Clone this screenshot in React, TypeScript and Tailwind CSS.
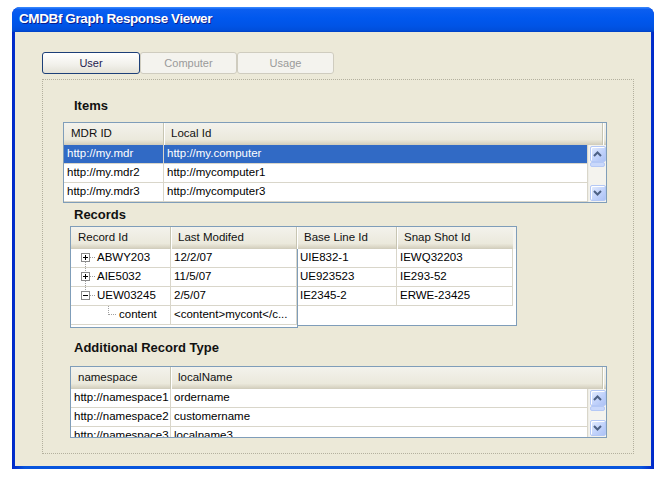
import React from 'react';

const UI = "font-['Liberation_Sans',Arial,sans-serif]";

function Chevron({ dir }: { dir: 'up' | 'down' }) {
  return (
    <svg width="9" height="6" viewBox="0 0 9 6">
      <path
        d={dir === 'up' ? 'M1 5 L4.5 1.5 L8 5' : 'M1 1 L4.5 4.5 L8 1'}
        stroke="#4d6185"
        strokeWidth="2"
        fill="none"
      />
    </svg>
  );
}

function ScrollButton({ dir }: { dir: 'up' | 'down' }) {
  return (
    <div className="mx-auto flex h-[16px] w-[16px] items-center justify-center rounded-[2px] border border-[#b4c8f6] bg-[linear-gradient(135deg,#e4ecfe,#c2d3fb_55%,#adc2f5)] shadow-[inset_1px_1px_0_#fff]">
      <Chevron dir={dir} />
    </div>
  );
}

// vertical scrollbar sitting next to the rows
function Scrollbar() {
  return (
    <div className="flex w-[18px] flex-col bg-[#f4f3ee] py-[1px] border-l border-[#eeede6]">
      <ScrollButton dir="up" />
      <div className="mx-auto h-[5px] w-[15px] rounded-[2px] border border-[#b4c8f6] bg-[#c9d8fb]" />
      <div className="flex-1" />
      <ScrollButton dir="down" />
    </div>
  );
}

function HeaderCell({ children, w, last }: { children?: React.ReactNode; w?: string; last?: boolean }) {
  return (
    <div
      className={`flex h-full items-center pl-[7px] text-[11.5px] text-[#111] ${w ?? 'flex-1'} ${
        last ? '' : 'border-r border-[#c7c5b2] shadow-[1px_0_0_#fff]'
      }`}
    >
      {children}
    </div>
  );
}

function Header({ cols, filler }: { cols: { label: string; w?: string }[]; filler?: boolean }) {
  return (
    <div className="flex h-[22px] bg-[linear-gradient(to_bottom,#f3f2ec,#ebe9dc_75%,#dcd8c8_90%,#cfcbba)]">
      {cols.map((c, i) => (
        <HeaderCell key={i} w={c.w}>
          {c.label}
        </HeaderCell>
      ))}
      {filler && <div className="flex-1" />}
    </div>
  );
}

function Cell({ children, w, sel }: { children?: React.ReactNode; w?: string; sel?: boolean }) {
  return (
    <div
      className={`flex h-full items-center overflow-hidden whitespace-nowrap pl-[3px] text-[11.5px] ${w ?? 'flex-1'} ${
        sel ? 'text-white' : 'text-black'
      } border-r border-[#d9d6ca]`}
    >
      {children}
    </div>
  );
}

function Row({ cells, sel, widths }: { cells: React.ReactNode[]; sel?: boolean; widths: (string | undefined)[] }) {
  return (
    <div className={`flex h-[19px] border-b border-[#d9d6ca] ${sel ? 'bg-[#316ac5]' : 'bg-white'}`}>
      {cells.map((c, i) => (
        <Cell key={i} w={widths[i]} sel={sel}>
          {c}
        </Cell>
      ))}
    </div>
  );
}

function TreeGlyph({ kind, top, bottom }: { kind: 'plus' | 'minus'; top?: boolean; bottom?: boolean }) {
  return (
    <svg width="22" height="18" viewBox="0 0 22 18" className="shrink-0">
      {top && <line x1="11.5" y1="0" x2="11.5" y2="4" stroke="#a0a0a0" strokeDasharray="1 1" />}
      {bottom && <line x1="11.5" y1="13" x2="11.5" y2="18" stroke="#a0a0a0" strokeDasharray="1 1" />}
      <line x1="16" y1="8.5" x2="22" y2="8.5" stroke="#a0a0a0" strokeDasharray="1 1" />
      <rect x="7.5" y="4.5" width="8" height="8" fill="#fff" stroke="#8a8a8a" />
      <line x1="9" y1="8.5" x2="14" y2="8.5" stroke="#000" />
      {kind === 'plus' && <line x1="11.5" y1="6" x2="11.5" y2="11" stroke="#000" />}
    </svg>
  );
}

function ChildGlyph() {
  return (
    <svg width="42" height="18" viewBox="0 0 42 18" className="shrink-0">
      <line x1="34.5" y1="0" x2="34.5" y2="9" stroke="#a0a0a0" strokeDasharray="1 1" />
      <line x1="35" y1="8.5" x2="42" y2="8.5" stroke="#a0a0a0" strokeDasharray="1 1" />
    </svg>
  );
}

function Label({ children, className }: { children: React.ReactNode; className?: string }) {
  return <div className={`ml-[31px] h-[15px] text-[13px] font-bold leading-[15px] text-[#111] ${className ?? ''}`}>{children}</div>;
}

export default function App() {
  const itemW = ['w-[100px]', undefined];
  const recW = ['w-[100px]', 'w-[126px]'];
  const baseW = ['w-[100px]', 'w-[116px]'];

  return (
    <div className={`h-[486px] w-[665px] bg-white pt-[7px] pl-[12px] ${UI}`}>
      <div className="flex h-[462px] w-[642px] flex-col overflow-hidden rounded-t-[8px] bg-[linear-gradient(to_right,#0027c8,#0855dd_2%,#0855dd_98%,#0027c8)]">
        {/* title bar */}
        <div className="flex h-[25px] shrink-0 items-center bg-[linear-gradient(to_bottom,#3d8dff_0%,#0b5ef0_10%,#0058ee_45%,#0054e6_75%,#004fdc_92%,#0040c4_100%)] pl-[7px]">
          <span className="text-[13.5px] font-bold tracking-[-0.4px] text-white [text-shadow:1px_1px_0_#0a1c8c]">
            CMDBf Graph Response Viewer
          </span>
        </div>

        {/* client area */}
        <div className="mx-[3px] mb-[3px] flex flex-1 flex-col bg-[#ece9d8] pl-[27px] pt-[20px]">
          {/* tabs */}
          <div className="flex h-[22px] text-[11px]">
            <div className="flex w-[98px] items-center justify-center rounded-[3px] border border-[#1c3f78] bg-[linear-gradient(to_bottom,#ffffff,#f1f0ea_60%,#e3e1d6)] text-[#1e1b4f]">
              User
            </div>
            <div className="flex w-[97px] items-center justify-center rounded-[3px] border border-[#cfccbf] bg-[#f4f3ee] text-[#9a9a9a]">
              Computer
            </div>
            <div className="flex w-[97px] items-center justify-center rounded-[3px] border border-[#cfccbf] bg-[#f4f3ee] text-[#9a9a9a]">
              Usage
            </div>
          </div>

          {/* dotted panel */}
          <div className="mt-[5px] flex h-[375px] w-[592px] flex-col border border-dotted border-[#b3b09e]">
            <Label className="mt-[18px]">Items</Label>

            <div className="ml-[20px] mt-[9px] w-[544px] border border-[#7f9db9] bg-white">
              <div className="flex h-[22px] bg-[linear-gradient(to_bottom,#f3f2ec,#ebe9dc_75%,#dcd8c8_90%,#cfcbba)]">
                <HeaderCell w="w-[100px]">MDR ID</HeaderCell>
                <HeaderCell w="flex-1">Local Id</HeaderCell>
                <div className="w-[3px]" />
              </div>
              <div className="flex">
                <div className="flex-1">
                  <Row sel widths={itemW} cells={['http://my.mdr', 'http://my.computer']} />
                  <Row widths={itemW} cells={['http://my.mdr2', 'http://mycomputer1']} />
                  <Row widths={itemW} cells={['http://my.mdr3', 'http://mycomputer3']} />
                </div>
                <Scrollbar />
              </div>
            </div>

            <Label className="mt-[4px]">Records</Label>

            <div className="ml-[27px] mt-[4px] flex items-start">
              {/* tree table */}
              <div className="relative z-10 h-[102px] w-[228px] border border-[#7f9db9] bg-white">
                <Header cols={[{ label: 'Record Id', w: 'w-[100px]' }, { label: 'Last Modifed', w: 'w-[126px]' }]} />
                <Row
                  widths={recW}
                  cells={[
                    <span className="flex items-center">
                      <TreeGlyph kind="plus" bottom />
                      <span className="pl-[1px]">ABWY203</span>
                    </span>,
                    '12/2/07',
                  ]}
                />
                <Row
                  widths={recW}
                  cells={[
                    <span className="flex items-center">
                      <TreeGlyph kind="plus" top bottom />
                      <span className="pl-[1px]">AIE5032</span>
                    </span>,
                    '11/5/07',
                  ]}
                />
                <Row
                  widths={recW}
                  cells={[
                    <span className="flex items-center">
                      <TreeGlyph kind="minus" top />
                      <span className="pl-[1px]">UEW03245</span>
                    </span>,
                    '2/5/07',
                  ]}
                />
                <Row
                  widths={recW}
                  cells={[
                    <span className="flex items-center">
                      <ChildGlyph />
                      <span className="pl-[3px]">content</span>
                    </span>,
                    '<content>mycont</c...',
                  ]}
                />
              </div>

              {/* base line table */}
              <div className="-ml-[2px] flex h-[100px] w-[221px] flex-col border border-[#7f9db9] bg-white">
                <div className="flex h-[22px]">
                  <div className="flex w-[216px] bg-[linear-gradient(to_bottom,#f3f2ec,#ebe9dc_75%,#dcd8c8_90%,#cfcbba)]">
                    <HeaderCell w="w-[100px]">Base Line Id</HeaderCell>
                    <HeaderCell w="w-[116px]" last>
                      Snap Shot Id
                    </HeaderCell>
                  </div>
                  <div className="flex-1 bg-[#f5f4ef]" />
                </div>
                <div className="w-[216px]">
                  <Row widths={baseW} cells={['UIE832-1', 'IEWQ32203']} />
                  <Row widths={baseW} cells={['UE923523', 'IE293-52']} />
                  <Row widths={baseW} cells={['IE2345-2', 'ERWE-23425']} />
                </div>
              </div>
            </div>

            <Label className="mt-[12px]">Additional Record Type</Label>

            <div className="ml-[27px] mt-[11px] flex h-[72px] w-[537px] flex-col overflow-hidden border border-[#7f9db9] bg-white">
              <div className="flex h-[22px] shrink-0 bg-[linear-gradient(to_bottom,#f3f2ec,#ebe9dc_75%,#dcd8c8_90%,#cfcbba)]">
                <HeaderCell w="w-[100px]">namespace</HeaderCell>
                <HeaderCell w="flex-1">localName</HeaderCell>
                <div className="w-[3px]" />
              </div>
              <div className="flex h-[48px] overflow-hidden">
                <div className="flex-1">
                  <Row widths={itemW} cells={['http://namespace1', 'ordername']} />
                  <Row widths={itemW} cells={['http://namespace2', 'customername']} />
                  <Row widths={itemW} cells={['http://namespace3', 'localname3']} />
                </div>
                <Scrollbar />
              </div>
            </div>
          </div>
        </div>
      </div>
    </div>
  );
}
